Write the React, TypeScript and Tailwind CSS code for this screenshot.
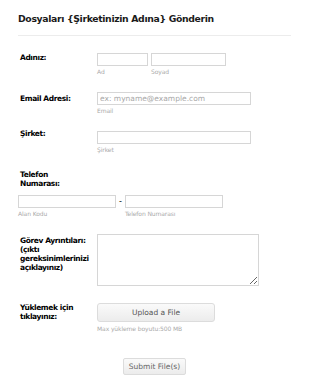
export default function App() {
  const font = { fontFamily: '"DejaVu Sans", Verdana, sans-serif' }
  const label = 'text-[7.5px] font-bold tracking-[-0.4px] whitespace-nowrap'
  const sub = 'mt-[2px] text-[6px] text-[#aaa] leading-[8px] tracking-[-0.1px] whitespace-nowrap'
  const field = 'h-[13px] border border-[#d6d6d6] outline-none bg-white'
  return (
    <div className="w-[310px] h-[386px] bg-white text-black overflow-hidden" style={font}>
      <div className="px-[18px] pt-[12px]">
        <h1 className="h-[14px] text-[9.3px] font-bold leading-[13px] tracking-[-0.35px] text-[#1a1a1a] whitespace-nowrap">
          Dosyaları {'{'}Şirketinizin Adına{'}'} Gönderin
        </h1>
        <div className="mt-[9px] w-[273px] border-t border-[#ececec]" />
      </div>

      {/* Adınız */}
      <div className="flex mt-[17px] pl-[20px]">
        <label className={`w-[77px] pt-[0px] leading-[10px] ${label}`}>Adınız:</label>
        <div className="flex gap-[3px]">
          <div className="flex flex-col">
            <input className={`w-[51px] ${field}`} />
            <span className={sub}>Ad</span>
          </div>
          <div className="flex flex-col">
            <input className={`w-[75px] ${field}`} />
            <span className={sub}>Soyad</span>
          </div>
        </div>
      </div>

      {/* Email */}
      <div className="flex mt-[16px] pl-[20px]">
        <label className={`w-[77px] pt-[2px] leading-[10px] ${label}`}>Email Adresi:</label>
        <div className="flex flex-col">
          <input
            placeholder="ex: myname@example.com"
            className={`w-[154px] ${field} px-[2px] text-[7.5px] placeholder:text-[#a8a8a8]`}
          />
          <span className={sub}>Email</span>
        </div>
      </div>

      {/* Şirket */}
      <div className="flex mt-[16px] pl-[20px]">
        <label className={`w-[77px] -mt-[2px] leading-[10px] ${label}`}>Şirket:</label>
        <div className="flex flex-col">
          <input className={`w-[154px] ${field}`} />
          <span className={sub}>Şirket</span>
        </div>
      </div>

      {/* Telefon */}
      <div className="mt-[17px] pl-[18px]">
        <label className={`block pl-[2px] leading-[8.7px] ${label}`}>
          Telefon
          <br />
          Numarası:
        </label>
        <div className="flex mt-[7px]">
          <div className="flex flex-col">
            <input className={`w-[98px] ${field}`} />
            <span className={sub}>Alan Kodu</span>
          </div>
          <span className="w-[9px] text-center text-[8px] leading-[13px]">-</span>
          <div className="flex flex-col">
            <input className={`w-[98px] ${field}`} />
            <span className={sub}>Telefon Numarası</span>
          </div>
        </div>
      </div>

      {/* Görev */}
      <div className="flex mt-[16px] pl-[20px]">
        <label className={`w-[77px] pt-[3px] leading-[8.7px] ${label}`}>
          Görev Ayrıntıları:
          <br />
          (çıktı
          <br />
          gereksinimlerinizi
          <br />
          açıklayınız)
        </label>
        <textarea className="w-[162px] h-[52px] border border-[#d6d6d6] outline-none resize" />
      </div>

      {/* Upload */}
      <div className="flex mt-[17px] pl-[20px]">
        <label className={`w-[77px] pt-[1px] leading-[8.7px] ${label}`}>
          Yüklemek için
          <br />
          tıklayınız:
        </label>
        <div className="flex flex-col">
          <button className="w-[118px] h-[19px] rounded-[3px] border border-[#dcdcdc] bg-gradient-to-b from-[#fafafa] to-[#ececec] text-[7.5px] text-[#555]">
            Upload a File
          </button>
          <span className={`${sub} !mt-[3px] text-[#999]`}>Max yükleme boyutu:500 MB</span>
        </div>
      </div>

      {/* Submit */}
      <div className="flex mt-[25px] pl-[123px]">
        <button className="w-[63px] h-[17px] rounded-[2px] border border-[#dcdcdc] bg-gradient-to-b from-[#fafafa] to-[#ececec] text-[7.5px] text-[#666]">
          Submit File(s)
        </button>
      </div>
    </div>
  )
}
